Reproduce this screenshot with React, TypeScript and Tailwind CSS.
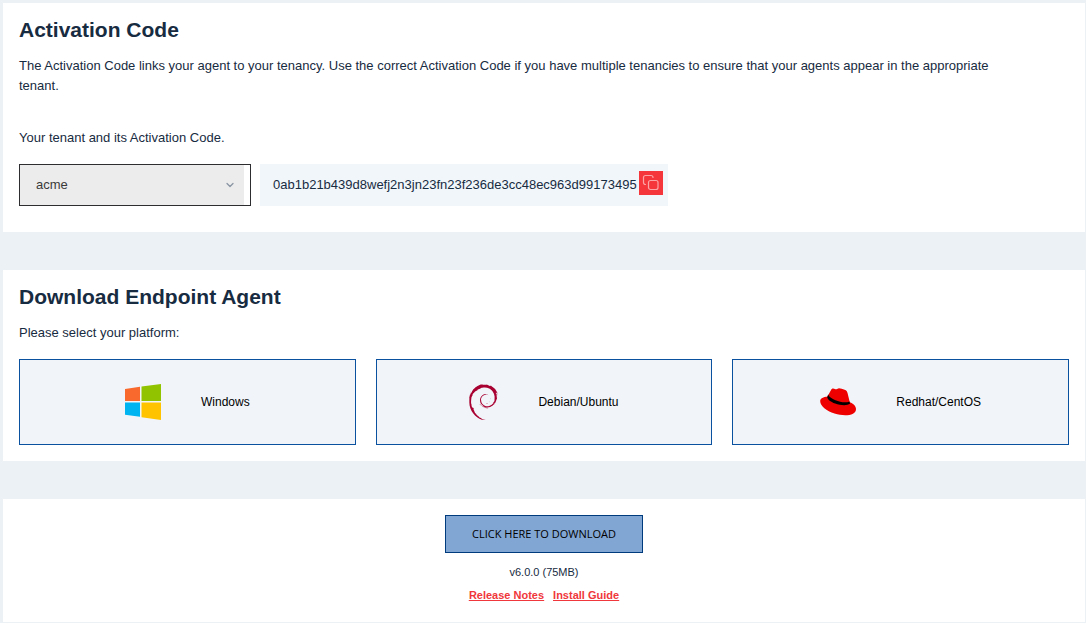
import type { ReactNode } from "react";
import { useState } from "react";
import { ChevronDown } from "lucide-react";
import { SiDebian } from "react-icons/si";

const ACTIVATION_CODE = "0ab1b21b439d8wefj2n3jn23fn23f236de3cc48ec963d99173495";

function CopyIcon() {
  return (
    <svg
      aria-hidden="true"
      className="h-[18px] w-[18px]"
      viewBox="0 0 18 18"
      fill="none"
      stroke="currentColor"
      strokeWidth="1.2"
      strokeLinecap="round"
    >
      <rect x="6.5" y="6.5" width="9.5" height="9" rx="2" />
      <path d="M3.5 10.5C2.3 10.5 1.5 9.8 1.5 8.5v-5c0-1.2.8-2 2-2h5.5c1.2 0 2 .8 2 2" />
    </svg>
  );
}

function WindowsLogo() {
  return (
    <svg aria-hidden="true" className="h-9 w-9" viewBox="0 0 36 36">
      <path fill="#f9682c" d="M0 5 15 2.8V17H0z" />
      <path fill="#91c300" d="M16.5 2.6 36 0v17H16.5z" />
      <path fill="#00b4f1" d="M0 18.5h15v14.3L0 30.8z" />
      <path fill="#ffc300" d="M16.5 18.5H36V36l-19.5-2.8z" />
    </svg>
  );
}

function DebianLogo() {
  return <SiDebian aria-hidden="true" className="h-9 w-[29px] text-[#a80030]" viewBox="2.4 0 19.2 24" />;
}

function RedHatLogo() {
  return (
    <svg aria-hidden="true" className="h-9 w-9" viewBox="0 0 36 36">
      <path
        fill="#e00"
        d="M7.3 12.8C3.5 13 .2 14.2.2 17.2c0 4.600 6.300 9.800 14.300 12.300 6.800 2.100 14 2.400 18.500.2 2-1 3-2.800 3-4.700 0-3-2.500-5.500-6.200-6.800L27.600 9.300c-.5-2-1.100-2.700-3-3.500C22.800 5 20.600 4.200 19 4.200c-1.200 0-1.500 1-2.600 1-1.200 0-1.900-.8-3.200-.8-1.100 0-1.900.6-2.300 1.900z"
      />
      <path
        fill="#000"
        d="M8.200 10.200c.1 2 3.100 4.200 7.300 6 4.500 1.900 10.500 2.800 14 1.200l.5 2.400c-3 2.100-9.500 1.700-14.800-.3C10.500 17.700 7 14.900 7.300 12.900z"
      />
    </svg>
  );
}

function Platform({ name, logo, onSelect }: { name: string; logo: ReactNode; onSelect: () => void }) {
  return (
    <button
      type="button"
      onClick={onSelect}
      className="flex h-[86px] items-center justify-center gap-10 border border-[#0a52a0] bg-[#f1f5fa] text-[12px] text-black"
    >
      {logo}
      <span>{name}</span>
    </button>
  );
}

export default function App() {
  const [, setPlatform] = useState("Windows");

  return (
    <main className="flex min-h-screen flex-col gap-[38px] bg-[#ebf1f5] pt-[3px] pr-px pb-px pl-[3px] font-['Liberation_Sans',Arial,sans-serif] text-[13px] leading-5 text-[#172b41]">
      <section className="bg-white px-4 pt-3 pb-[26px]">
        <h1 className="text-[21px] leading-[30px] font-bold">Activation Code</h1>
        <p className="mt-[11px] max-w-[1000px]">
          The Activation Code links your agent to your tenancy. Use the correct Activation Code if you have multiple
          tenancies to ensure that your agents appear in the appropriate tenant.
        </p>
        <label htmlFor="tenant" className="mt-8 block">
          Your tenant and its Activation Code.
        </label>
        <div className="mt-4 flex gap-[9px]">
          <div className="relative h-[42px] w-[232px] border border-[#2d2d2f] pr-1.5">
            <select id="tenant" className="h-full w-full appearance-none bg-[#ececec] px-4 text-[13px] text-[#3a3a3a]">
              <option>acme</option>
            </select>
            <ChevronDown
              aria-hidden="true"
              strokeWidth={2.5}
              className="pointer-events-none absolute top-3.5 right-3.5 h-3 w-3 text-[#8a94a3]"
            />
          </div>
          <div className="flex h-[42px] items-center gap-0.5 bg-[#f0f6fa] pr-[5px] pl-[13px]">
            <span>{ACTIVATION_CODE}</span>
            <button
              type="button"
              aria-label="Copy activation code"
              onClick={() => navigator.clipboard?.writeText(ACTIVATION_CODE)}
              className="mb-1 flex h-6 w-6 items-center justify-center bg-[#f5373b] text-[#fba5a7]"
            >
              <CopyIcon />
            </button>
          </div>
        </div>
      </section>

      <section className="bg-white px-4 pt-3 pb-4">
        <h2 className="text-[21px] leading-[30px] font-bold">Download Endpoint Agent</h2>
        <p className="mt-[11px]">Please select your platform:</p>
        <div className="mt-4 grid grid-cols-3 gap-5">
          <Platform name="Windows" logo={<WindowsLogo />} onSelect={() => setPlatform("Windows")} />
          <Platform name="Debian/Ubuntu" logo={<DebianLogo />} onSelect={() => setPlatform("Debian/Ubuntu")} />
          <Platform name="Redhat/CentOS" logo={<RedHatLogo />} onSelect={() => setPlatform("Redhat/CentOS")} />
        </div>
      </section>

      <section className="flex flex-col items-center bg-white px-4 pt-4 pb-[17px] text-[11px]">
        <button
          type="button"
          className="h-[38px] w-[198px] border border-[#003c7d] bg-[#82a6d3] font-['Open_Sans',sans-serif] text-[11px] text-black"
        >
          CLICK HERE TO DOWNLOAD
        </button>
        <p className="mt-[9px]">v6.0.0 (75MB)</p>
        <nav className="mt-[3px] flex gap-[9px] font-bold text-[#f0373b] underline">
          <a href="#release-notes">Release Notes</a>
          <a href="#install-guide">Install Guide</a>
        </nav>
      </section>
    </main>
  );
}
